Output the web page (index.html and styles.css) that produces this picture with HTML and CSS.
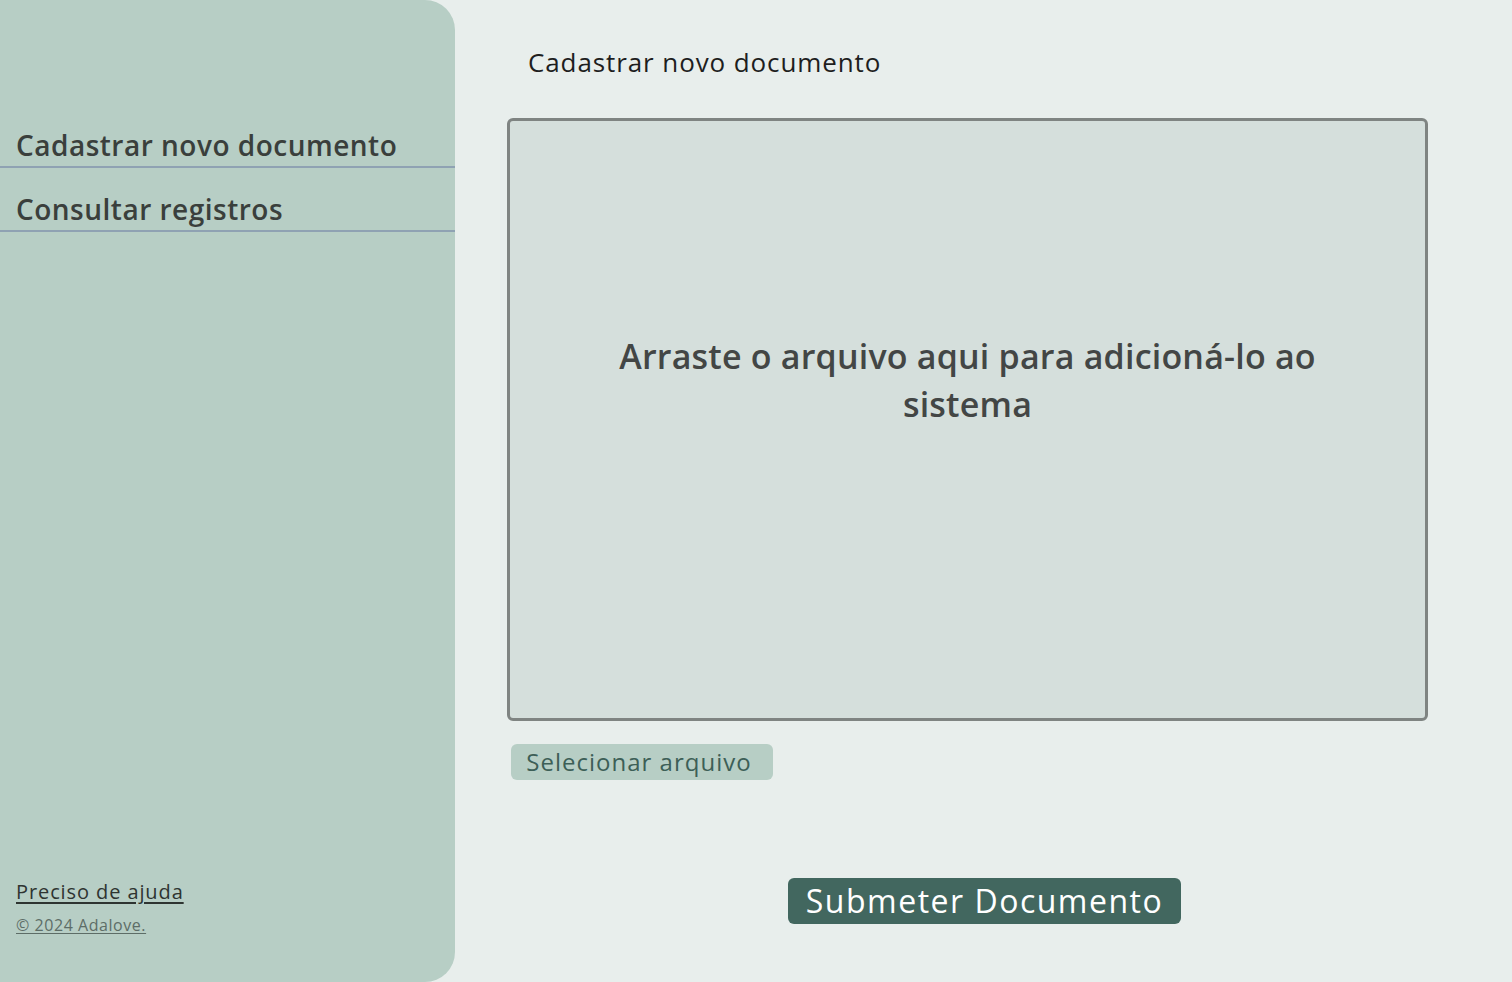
FILE: index.html
```html
<!DOCTYPE html>
<html lang="pt-BR">
<head>
    <meta charset="UTF-8">
    <meta name="viewport" content="width=device-width, initial-scale=1.0">
    <title>Cadastrar novo documento</title>
    <link rel="stylesheet" href="styles.css">
</head>
<body>
    <aside class="sidebar">
        <nav class="nav">
            <a class="nav-item" href="#">Cadastrar novo documento</a>
            <a class="nav-item" href="#">Consultar registros</a>
        </nav>

        <div class="sidebar-footer">
            <a class="help-link" href="#">Preciso de ajuda</a>
            <a class="copyright" href="#">© 2024 Adalove.</a>
        </div>
    </aside>

    <main class="content">
        <h1 class="page-title">Cadastrar novo documento</h1>

        <div class="dropzone">
            <p>Arraste o arquivo aqui para adicioná-lo ao sistema</p>
        </div>

        <div class="file-row">
            <button class="btn-select" type="button">Selecionar arquivo</button>
        </div>

        <div class="submit-row">
            <button class="btn-submit" type="button">Submeter Documento</button>
        </div>
    </main>
</body>
</html>
```

FILE: styles.css
```css
* {
    margin: 0;
    padding: 0;
    box-sizing: border-box;
}

body {
    font-family: 'Open Sans', 'DejaVu Sans', sans-serif;
    background: #e8eeec;
    height: 100vh;
    display: flex;
    overflow: hidden;
}

.sidebar {
    width: 455px;
    flex-shrink: 0;
    background: #b7cec5;
    border-radius: 0 30px 30px 0;
    display: flex;
    flex-direction: column;
    padding-top: 104px;
}

.nav {
    display: flex;
    flex-direction: column;
}

.nav-item {
    display: block;
    padding: 21px 16px 1px;
    height: 64px;
    border-bottom: 2px solid #8fa2b3;
    color: #3a3f3c;
    font-size: 28px;
    line-height: 40px;
    font-weight: 600;
    letter-spacing: 0.5px;
    text-decoration: none;
}

.sidebar-footer {
    margin-top: auto;
    padding: 0 16px 46px;
    display: flex;
    flex-direction: column;
    gap: 8px;
}

.help-link {
    color: #2e3431;
    font-size: 20px;
    line-height: 28px;
    letter-spacing: 0.9px;
    text-decoration: underline;
    text-underline-offset: 3px;
}

.copyright {
    color: #5d6d67;
    font-size: 16px;
    line-height: 22px;
    letter-spacing: 0.55px;
    text-decoration: underline;
    text-underline-offset: 2px;
}

.content {
    flex: 1;
    padding: 44px 84px 0 52px;
}

.page-title {
    font-size: 26px;
    line-height: 36px;
    font-weight: 400;
    color: #1e1e1e;
    padding-left: 21px;
    margin-bottom: 38px;
    letter-spacing: 0.9px;
}

.dropzone {
    height: 603px;
    border: 3px solid #7f8482;
    border-radius: 6px;
    background: #d5dfdc;
    display: flex;
    align-items: center;
    justify-content: center;
    padding: 0 90px 80px;
}

.dropzone p {
    text-align: center;
    font-size: 34px;
    line-height: 48px;
    font-weight: 600;
    color: #434645;
    letter-spacing: 0.2px;
}

.file-row {
    padding: 23px 0 0 4px;
}

.btn-select {
    background: #b7cec5;
    border: none;
    border-radius: 6px;
    width: 262px;
    height: 36px;
    padding-right: 6px;
    color: #3d5f57;
    font-family: inherit;
    font-size: 24px;
    line-height: 36px;
    letter-spacing: 1px;
    cursor: pointer;
}

.submit-row {
    display: flex;
    justify-content: center;
    padding: 98px 0 0 34px;
}

.btn-submit {
    background: #42675f;
    border: none;
    border-radius: 6px;
    width: 393px;
    height: 46px;
    color: #ffffff;
    font-family: inherit;
    font-size: 32px;
    line-height: 46px;
    letter-spacing: 1.5px;
    cursor: pointer;
}
```
